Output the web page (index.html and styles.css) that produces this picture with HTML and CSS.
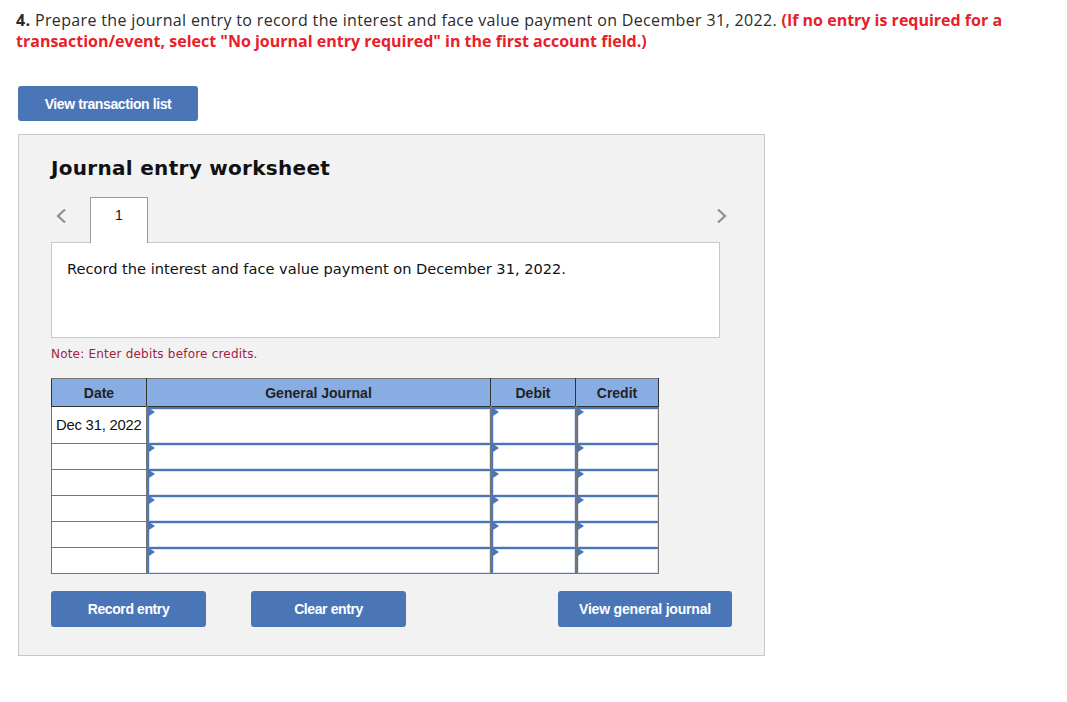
FILE: index.html
```html
<!DOCTYPE html>
<html>
<head>
<meta charset="utf-8">
<link rel="stylesheet" href="styles.css">
</head>
<body>
<div class="question">
  <p class="q-text"><b>4.</b> Prepare the journal entry to record the interest and face value payment on December 31, 2022. <span class="red">(If no entry is required for a transaction/event, select "No journal entry required" in the first account field.)</span></p>
</div>
<button class="btn btn-top">View transaction list</button>
<div class="panel">
  <h2 class="title">Journal entry worksheet</h2>
  <div class="tabs">
    <span class="chev chev-left"><svg width="12" height="16" viewBox="0 0 12 16"><path d="M10 1.5 L3 8 L10 14.5" fill="none" stroke="#8a8f98" stroke-width="2.2"/></svg></span>
    <div class="tab">1</div>
    <span class="spacer"></span>
    <span class="chev chev-right"><svg width="12" height="16" viewBox="0 0 12 16"><path d="M2 1.5 L9 8 L2 14.5" fill="none" stroke="#8a8f98" stroke-width="2.2"/></svg></span>
  </div>
  <div class="desc">Record the interest and face value payment on December 31, 2022.</div>
  <p class="note">Note: Enter debits before credits.</p>
  <table class="journal">
    <thead>
      <tr><th class="c-date">Date</th><th class="c-acct">General Journal</th><th class="c-amt">Debit</th><th class="c-amt2">Credit</th></tr>
    </thead>
    <tbody>
      <tr class="first"><td class="date">Dec 31, 2022</td><td class="inp"><div class="box"></div></td><td class="inp"><div class="box"></div></td><td class="inp"><div class="box"></div></td></tr>
      <tr><td class="date"></td><td class="inp"><div class="box"></div></td><td class="inp"><div class="box"></div></td><td class="inp"><div class="box"></div></td></tr>
      <tr><td class="date"></td><td class="inp"><div class="box"></div></td><td class="inp"><div class="box"></div></td><td class="inp"><div class="box"></div></td></tr>
      <tr><td class="date"></td><td class="inp"><div class="box"></div></td><td class="inp"><div class="box"></div></td><td class="inp"><div class="box"></div></td></tr>
      <tr><td class="date"></td><td class="inp"><div class="box"></div></td><td class="inp"><div class="box"></div></td><td class="inp"><div class="box"></div></td></tr>
      <tr><td class="date"></td><td class="inp"><div class="box"></div></td><td class="inp"><div class="box"></div></td><td class="inp"><div class="box"></div></td></tr>
    </tbody>
  </table>
  <div class="actions">
    <button class="btn btn-rec">Record entry</button>
    <button class="btn btn-clear">Clear entry</button>
    <span class="spacer"></span>
    <button class="btn btn-view">View general journal</button>
  </div>
</div>
</body>
</html>
```

FILE: styles.css
```css
* { box-sizing: border-box; }
body {
  margin: 0;
  padding: 10px 18px 0 16px;
  background: #fff;
  font-family: "Open Sans", "Liberation Sans", sans-serif;
  color: #333;
}
.question { width: 1020px; }
.q-text {
  margin: 0;
  font-size: 16px;
  line-height: 21px;
  letter-spacing: 0.35px;
  color: #2b2b2b;
}
.q-text b { font-weight: 700; }
.red { color: #e8202a; font-weight: 700; letter-spacing: 0; }
.btn {
  display: block;
  border: none;
  border-radius: 3px;
  background: #4a76b8;
  color: #fff;
  font-family: "Liberation Sans", Arial, sans-serif;
  font-weight: 700;
  font-size: 14px;
  letter-spacing: -0.4px;
  height: 36px;
  padding: 0;
  cursor: pointer;
}
.btn-top {
  margin: 34px 0 0 2px;
  width: 180px;
  height: 35px;
}
.panel {
  margin: 13px 0 0 2px;
  width: 747px;
  height: 522px;
  background: #f2f2f2;
  border: 1px solid #c8c8c8;
  padding: 21px 44px 0 32px;
}
.title {
  margin: 0;
  font-family: "DejaVu Sans", Verdana, sans-serif;
  font-weight: 700;
  font-size: 20px;
  line-height: 24px;
  color: #111;
  letter-spacing: 0.3px;
}
.tabs {
  display: flex;
  align-items: flex-start;
  margin-top: 17px;
  height: 46px;
}
.chev { display: block; margin-top: 10px; height: 16px; }
.chev-left { margin-left: 4px; width: 35px; }
.chev-right { margin-right: -16px; width: 20px; }
.tab {
  width: 58px;
  height: 46px;
  background: #fff;
  border: 1px solid #9a9a9a;
  border-bottom: none;
  text-align: center;
  font-family: "Liberation Sans", Arial, sans-serif;
  font-size: 14px;
  line-height: 34px;
  color: #111;
  position: relative;
  z-index: 1;
}
.spacer { flex: 1; }
.desc {
  margin-top: -1px;
  height: 96px;
  background: #fff;
  border: 1px solid #c8c8c8;
  padding: 17px 15px;
  font-family: "DejaVu Sans", Verdana, sans-serif;
  font-size: 14.6px;
  line-height: 18px;
  color: #111;
}
.note {
  margin: 8px 0 0 0;
  font-family: "DejaVu Sans", Verdana, sans-serif;
  font-size: 12px;
  line-height: 16px;
  color: #a3213a;
  letter-spacing: 0.2px;
}
.journal {
  margin-top: 16px;
  border-collapse: collapse;
  font-family: "Liberation Sans", Arial, sans-serif;
  font-size: 14px;
  border: 1.5px solid #757575;
}
.journal th {
  height: 28px;
  background: #88ade3;
  color: #222;
  font-weight: 700;
  border: 1px solid #333;
  border-top: 1.5px solid #757575;
  padding: 0;
}
.c-date { width: 95px; }
.c-acct { width: 344px; }
.c-amt { width: 85px; }
.c-amt2 { width: 83px; }
.journal td {
  padding: 0;
  height: 26px;
  border: 1px solid #757575;
  background: #fff;
}
.journal tr.first td { height: 37px; }
.journal td.date {
  padding-left: 4px;
  color: #111;
  font-size: 14.8px;
  letter-spacing: -0.2px;
}
.journal td.inp {
  border-left: 2px solid #757575;
  border-top: none;
  border-bottom: none;
  background: #4a76b8;
  padding: 1px 0 1px 0;
}
.box {
  position: relative;
  height: 100%;
  min-height: 22px;
  background: #fff;
  border: 1px solid #d9e3f3;
  margin: 1px 0 0 1px;
}
.journal tr.first .box { min-height: 33px; }
.box::before {
  content: "";
  position: absolute;
  left: -1px;
  top: -2px;
  border-left: 6px solid #4a76b8;
  border-top: 4px solid transparent;
  border-bottom: 4px solid transparent;
}
.actions {
  display: flex;
  margin-top: 17px;
}
.btn-rec { width: 155px; }
.btn-clear { width: 155px; margin-left: 45px; }
.btn-view { width: 174px; margin-right: -12px; letter-spacing: -0.2px; }
```
